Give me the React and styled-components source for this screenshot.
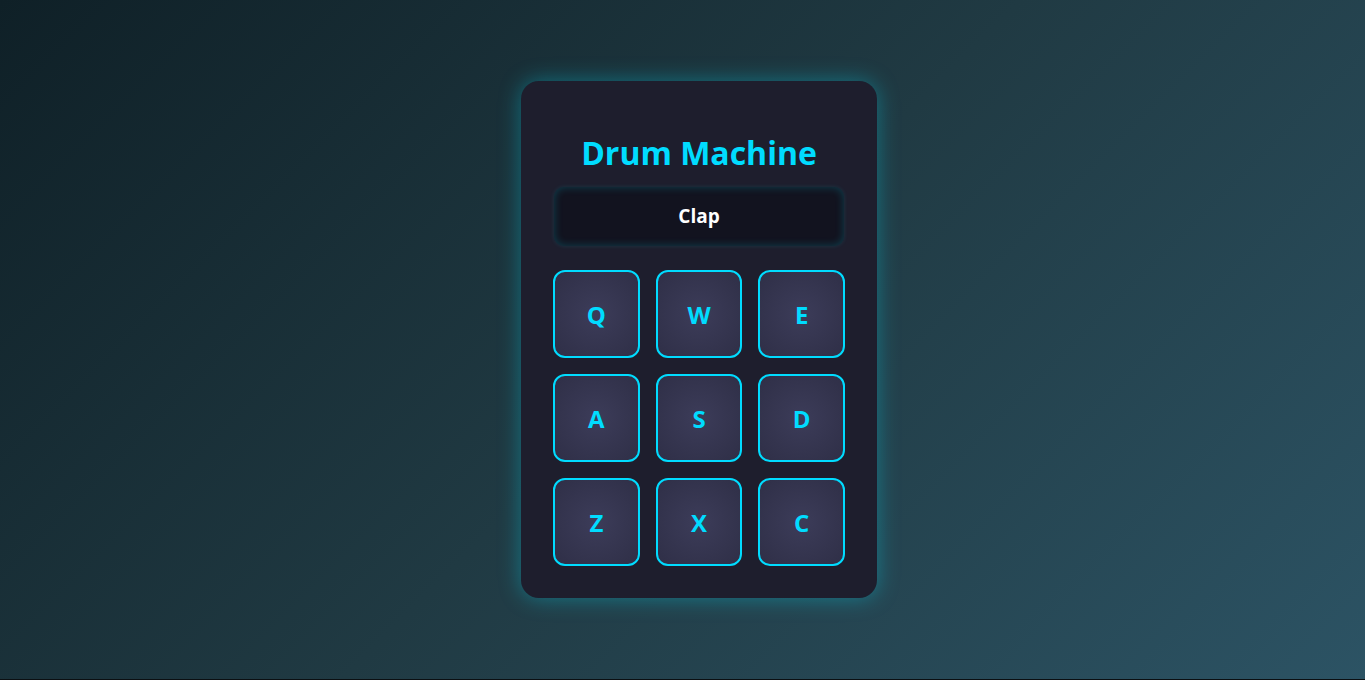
import styled, { createGlobalStyle } from 'styled-components';

const GlobalStyle = createGlobalStyle`
  html, body {
    margin: 0;
    padding: 0;
    background: #0b0f12;
  }
  * {
    box-sizing: border-box;
  }
`;

const pads = [
  { key: 'Q', name: 'Heater 1' },
  { key: 'W', name: 'Heater 2' },
  { key: 'E', name: 'Heater 3' },
  { key: 'A', name: 'Heater 4' },
  { key: 'S', name: 'Clap' },
  { key: 'D', name: 'Open HH' },
  { key: 'Z', name: "Kick n' Hat" },
  { key: 'X', name: 'Kick' },
  { key: 'C', name: 'Closed HH' },
];

const Page = styled.main`
  height: calc(100vh - 1px);
  display: flex;
  align-items: center;
  justify-content: center;
  padding-left: 33px;
  background: linear-gradient(135deg, #0f2027, #203a43, #2c5364);
  font-family: 'Open Sans', 'Noto Sans', sans-serif;
`;

const Machine = styled.div`
  width: 356px;
  padding: 32px;
  border-radius: 18px;
  background: #1e1e2d;
  box-shadow: 0 0 22px rgba(0, 229, 255, 0.35);
  display: flex;
  flex-direction: column;
  align-items: stretch;
`;

const Title = styled.h1`
  margin: 20px 0 14px;
  text-align: center;
  font-size: 32px;
  font-weight: 700;
  line-height: 40px;
  color: #00dcff;
`;

const Display = styled.div`
  height: 59px;
  margin: 0 1px 24px;
  display: flex;
  align-items: center;
  justify-content: center;
  padding-bottom: 1px;
  border-radius: 10px;
  background: #12131f;
  box-shadow: inset 0 0 8px rgba(0, 229, 255, 0.22), 0 0 4px rgba(0, 229, 255, 0.12);
  color: #ffffff;
  font-size: 19px;
  font-weight: 700;
`;

const PadGrid = styled.div`
  display: grid;
  grid-template-columns: repeat(3, 1fr);
  grid-auto-rows: 88px;
  gap: 16px;
`;

const Pad = styled.button`
  display: flex;
  align-items: center;
  justify-content: center;
  padding: 0;
  border: 2px solid #00dcff;
  border-radius: 12px;
  background: radial-gradient(circle at center, #3c3c59 0%, #2f2f47 100%);
  color: #00dcff;
  font-family: inherit;
  font-size: 24px;
  font-weight: 700;
  cursor: pointer;
`;

const App = () => {
  return (
    <>
      <GlobalStyle />
      <Page>
        <Machine id="drum-machine">
          <Title>Drum Machine</Title>
          <Display id="display">Clap</Display>
          <PadGrid>
            {pads.map((pad) => (
              <Pad key={pad.key} id={pad.name} className="drum-pad">
                {pad.key}
              </Pad>
            ))}
          </PadGrid>
        </Machine>
      </Page>
    </>
  );
};

export default App;
